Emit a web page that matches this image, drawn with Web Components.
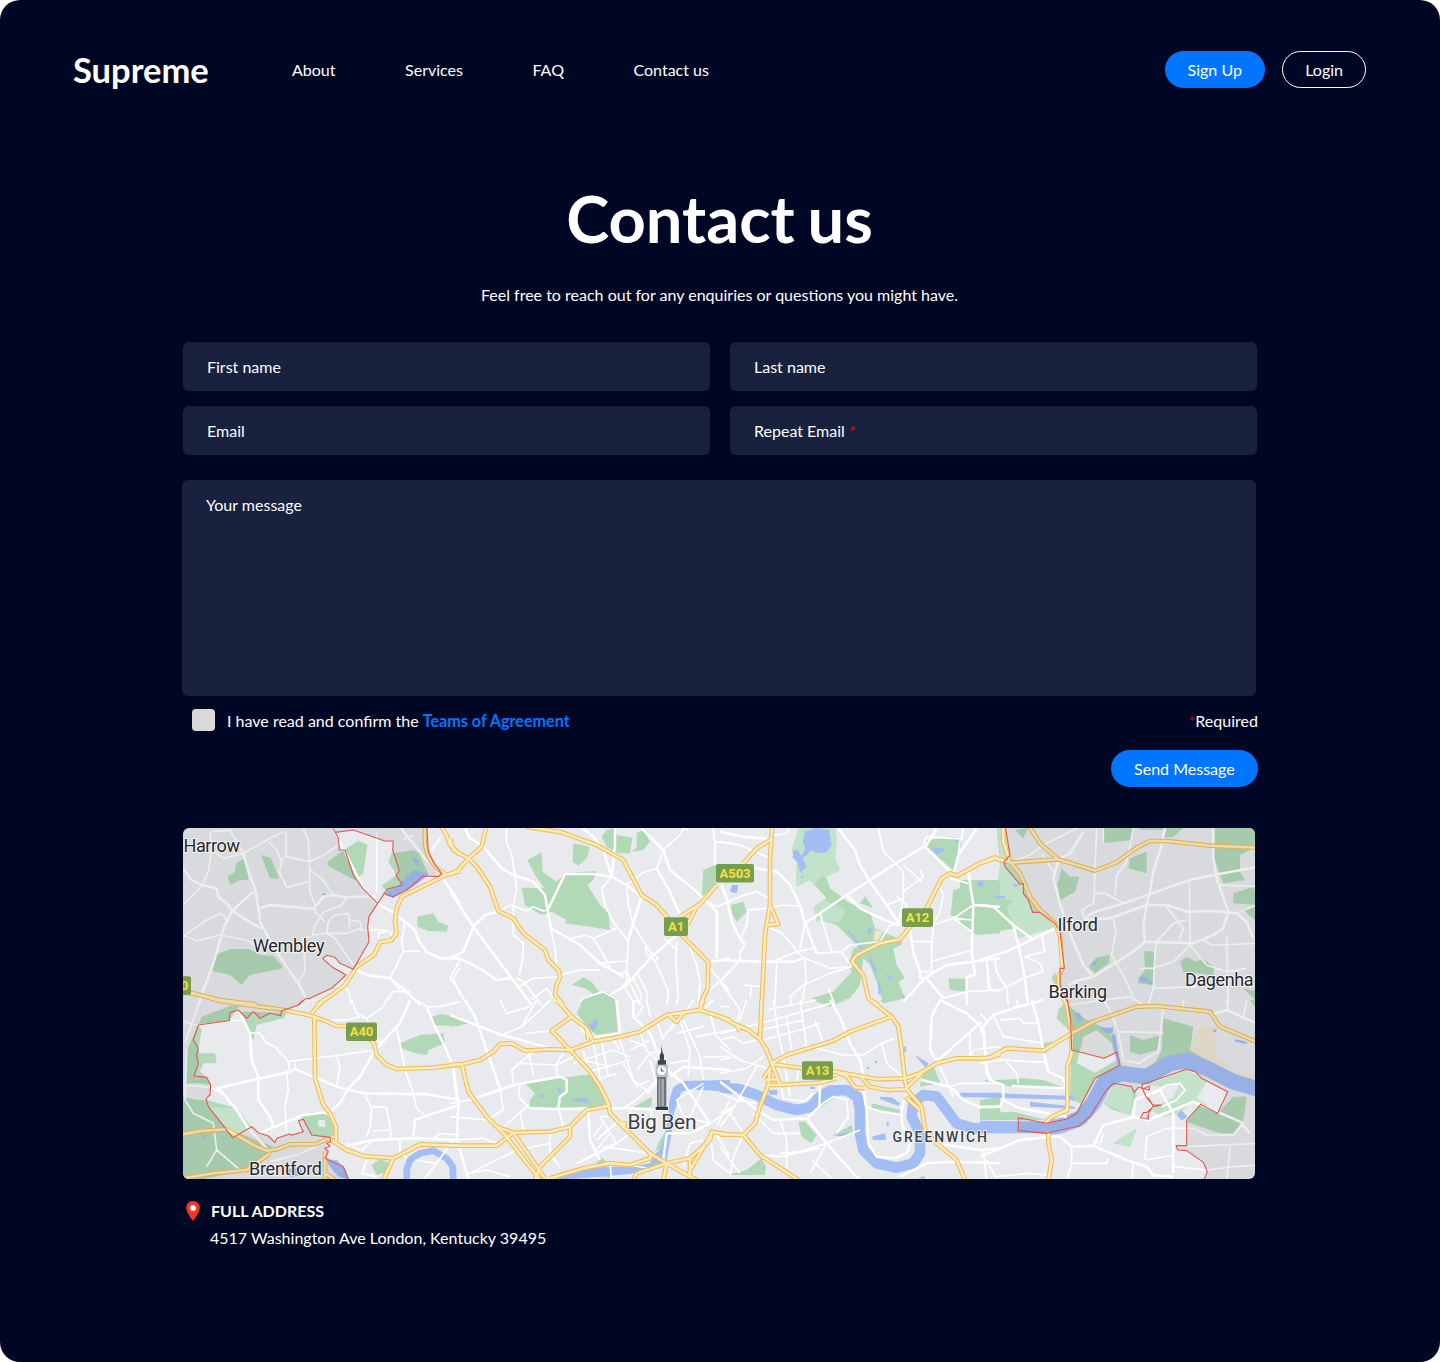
<!DOCTYPE html>
<html lang="en">
<head>
<meta charset="utf-8">
<title>Contact us</title>
<style>
html,body{margin:0;background:#fff}
body{font:16.03px/20px Lato,sans-serif;color:#fff}
</style>
</head>
<body>
<contact-page>
  <site-header slot="header"></site-header>
  <contact-form></contact-form>
  <city-map></city-map>
  <address-card><span slot="title">FULL ADDRESS</span>4517 Washington Ave London, Kentucky 39495</address-card>
</contact-page>
<script>
function define(name, html, setup) {
  const template = document.createElement('template');
  template.innerHTML = html;
  customElements.define(name, class extends HTMLElement {
    constructor() {
      super();
      this.attachShadow({mode: 'open'}).append(template.content.cloneNode(true));
      if (setup) setup(this.shadowRoot);
    }
  });
}

define('contact-page', `<style>
:host{display:flex;flex-direction:column;box-sizing:border-box;width:1440px;height:1362px;padding:51px 74px 0 73px;border-radius:20px;background:#000724}
h1{margin:92px 0 0;font-size:65px;line-height:76px;font-weight:700;text-align:center;word-spacing:-3px}
p{margin:29px 0 0;text-align:center}
main{display:flex;flex-direction:column;margin:37px 108px 0 109px}
</style>
<slot name="header"></slot>
<h1>Contact us</h1>
<p>Feel free to reach out for any enquiries or questions you might have.</p>
<main><slot></slot></main>`);

define('pill-button', `<style>
:host{display:block}
button{display:block;box-sizing:border-box;height:37px;padding:1px 23.300px 0 23px;border:0;border-radius:19px;background:#0075ff;color:#fff;font:inherit;white-space:nowrap}
:host([outline]) button{background:none;border:1px solid #fff;padding:1px 22px 0}
</style><button><slot></slot></button>`);

define('nav-link', `<style>:host{display:block}a{color:#fff;text-decoration:none}</style><a><slot></slot></a>`);

define('site-header', `<style>
:host{display:flex;align-items:center;height:37px}
strong{font-size:34.500px;line-height:40px;font-weight:700;width:219px}
nav{display:flex;gap:69.500px;flex:1}
div{display:flex;gap:17px}
</style>
<strong>Supreme</strong>
<nav><nav-link>About</nav-link><nav-link>Services</nav-link><nav-link>FAQ</nav-link><nav-link>Contact us</nav-link></nav>
<div><pill-button>Sign Up</pill-button><pill-button outline>Login</pill-button></div>`);

define('text-field', `<style>
:host{display:block;box-sizing:border-box;height:49px;padding:15px 24px;border-radius:6px;background:#18213d}
:host([multiline]){height:216px}
</style><slot></slot>`);

define('contact-form', `<style>
:host{display:block;margin-left:1px}
.grid{display:grid;grid-template-columns:527px 527px;gap:15px 20px}
.message{margin:25px 2px 0 -1px}
.row{display:flex;align-items:center;height:22px;margin-top:13px;padding-left:9px}
.box{width:22.500px;height:22.500px;border-radius:4px;background:#d9d9d9;margin-right:12.500px}
.terms{flex:1;padding-top:1px}
.terms b{color:#0075ff;font-size:16.150px}
i{color:red;font-style:normal}
.required{padding-top:1px}
.required i{color:#c20010}
.send{display:flex;justify-content:flex-end;margin-top:19px}
</style>
<div class="grid"><text-field>First name</text-field><text-field>Last name</text-field><text-field>Email</text-field><text-field>Repeat Email <i>*</i></text-field></div>
<text-field class="message" multiline>Your message</text-field>
<div class="row"><span class="box"></span><span class="terms">I have read and confirm the <b>Teams of Agreement</b></span><span class="required"><i>*</i>Required</span></div>
<div class="send"><pill-button>Send Message</pill-button></div>`);

define('address-card', `<style>
:host{display:flex;margin-top:22px;padding-left:4px}
svg{width:14px;height:20px;margin-right:10px}
.title{font-weight:700;padding-left:1px;margin-bottom:7px}
</style>
<svg viewBox="0 0 14 20"><path fill="#f23427" d="M7 0C3 0 .2 2.9.2 6.7.2 11.600 7 20 7 20s6.800-8.400 6.800-13.300C13.800 2.900 11 0 7 0Z"/><circle cx="7" cy="6.900" r="2.900" fill="#fff"/></svg>
<div><div class="title"><slot name="title"></slot></div><div><slot></slot></div></div>`);

/* Map sheets: each has an origin in page pixels; geometry is in thirds of a pixel. */
const SHEETS = [
{ at: [180, 825],
  park: '443,110 495,72 535,47 562,60 550,145 525,165 505,155 445,122|185,105 200,100 205,165 180,165 152,180 143,155 165,140 168,115|243,90 272,98 298,162 270,160|107,390 150,372 208,372 240,390 280,392 308,425 300,432 210,450 185,480 150,450 97,437|712,275 760,265 775,290 805,303 800,320 745,318 712,305|635,85 700,75 718,85 745,150 700,180 640,220 605,182 650,150 625,110',
  water: '620,200 650,185 680,155 700,135 745,145 740,155 700,185 640,218 615,210|693,95 715,105 718,125 705,115|428,205 436,205 436,212 428,212',
  major: '460,10 500,90 550,190 593,235 650,270 675,290 705,315 715,345 740,380 780,400 840,400|655,0 735,100 785,155 840,235|190,85 205,140 225,190 237,260 240,290 270,345 300,395 330,440 355,475 378,520|520,430 560,450 630,460 680,500 720,540|237,250 270,240 330,245 400,252 430,215 460,210 500,217 585,213|8,130 35,165 65,180 110,190 115,215 140,235 157,257 215,295 250,312|220,200 157,257 135,300 125,330 100,415 65,510 55,540',
  minor: '90,20 95,75 130,100 190,85 250,50 310,20|97,20 150,15 190,85|95,75 85,140 65,185 40,210 8,240|8,330 50,348 120,330 200,345 240,370|8,335 80,285 125,265 140,285|265,50 290,75 305,110 298,140 320,188 385,170|318,20 318,95 298,110|318,95 390,110 440,85 475,60|370,10 385,45 388,100 390,200 405,240 405,260 435,290|390,135 430,165 460,210|500,217 485,240 430,262 405,300 397,330 440,325 465,340 520,420|440,325 445,290 465,270 505,265 508,285 540,290 545,310 500,325 440,325|508,285 508,315|540,315 620,315|370,340 397,333|370,340 375,440 355,475|590,20 590,200|670,45 700,30|780,40 750,80|630,460 670,380 720,378|675,290 665,350 670,380|495,480 510,510 512,540|630,460 660,495|690,500 640,500 610,540|840,430 820,460 840,510|595,340 595,325 625,318 650,345',
  trunk: '735,0 735,60 745,95 765,125 798,150 840,138|780,0 800,30 810,60 840,90|798,150 740,178 665,215 650,250 645,290 650,325 635,345 600,352 582,390 530,425 495,480 455,510 410,540|8,495 60,510 120,525 230,538',
  shade: '0,0 460,0 475,40 478,75 495,75 520,150 548,190 593,235 567,275 563,305 567,350 520,433 480,415 465,397 440,391 428,401 455,425 498,450 455,490 385,522 378,520 368,525 0,525|460,0 465,22 520,15 615,48 640,48 638,75 658,138 648,150 667,180 622,192 610,205 638,215 680,195 730,153 775,155 785,145 765,120 745,80 740,0',
  border: '455,0 475,40 478,75 495,75 520,150 548,190 593,235 567,275 563,305 567,350 520,433 480,415 465,397 440,391 428,401 455,425 498,450 455,490 385,522 378,520 355,540|465,22 520,15 615,48 640,48 638,75 658,138 648,150 667,180 622,192 593,235|610,205 638,215 680,195 730,153 775,155 785,145 765,120 745,80 740,0' },
{ at: [450, 825],
  park: '232,105 275,82 278,140 320,170 345,145 438,138 430,165 412,180 450,240 475,265 480,315 420,305 345,295 350,285 305,260 275,270 225,240 215,188 283,190 255,150|370,55 420,65 410,100 385,122 368,110|455,35 470,15 495,8 500,30 547,38 540,85 505,85 495,80 470,65|560,25 580,15 600,50 580,75 545,80 560,65|755,215 760,135 800,118 800,180|365,480 400,457 425,470 448,500 430,507 405,490|390,540 400,520 460,498 490,510 495,540',
  major: '45,10 60,40 100,65 155,130 190,150 250,170 285,210 293,255 303,310 390,360 450,415 520,455|0,198 70,305 140,400 245,540|145,260 105,270 70,305 40,380 0,400|398,10 430,35 460,75 485,155|575,10 640,75 660,135 690,160 740,200 765,225 800,260 800,400|620,130 660,200 690,270|575,215 548,300 533,350|345,147 293,255|775,412 840,400|485,155 495,60 495,10|345,147 430,147 485,155 530,180 575,215|650,300 680,330 600,400 530,480 480,510|0,395 40,405 90,430 140,465 180,460',
  minor: '170,10 168,45 185,90 195,150 200,190 190,240 190,330 220,355 218,400 208,450|145,260 180,240 230,258 250,245 280,258 293,255|30,405 0,460 30,500 50,540|485,155 455,190 465,240 490,290 535,350 530,430 530,470|530,180 535,240 550,300 600,380 635,450 655,500 650,540|530,180 575,145 620,130 640,75 690,30 700,10 715,15|790,10 795,60 795,120|795,50 840,55|680,350 678,420 685,510 680,540|720,340 720,370 740,420 750,470 745,540|775,425 840,500|775,500 840,440|365,340 405,330 430,340 500,310|430,340 455,380 480,430|330,450 390,435 450,435|440,415 530,408|303,310 315,370 320,430|585,365 625,400 615,410 590,385 585,365|645,340 680,375|200,490 250,460 330,455|245,525 290,490 320,530|200,460 220,470 275,540|520,455 510,445 530,440 540,460 520,480 550,530 570,530 575,510 550,460|565,450 590,500 590,540|540,475 570,540|390,530 400,520 460,500 495,520|765,225 800,245 840,230',
  trunk: '0,40 10,75 55,100 80,125 120,185 145,258 190,280 220,325 285,375 295,405 325,435 330,455 320,480 315,510 340,540|110,0 95,65 55,100 25,135 0,148|228,5 335,22 440,60 520,105 575,210 620,240 650,275 700,335 775,412 773,490 750,540|690,275 750,238 800,180|740,245 712,300' },
{ at: [720, 825],
  park: '240,0 345,0 350,45 345,100 360,135 318,155 330,190 390,235 450,260 465,310 545,345 545,360 520,370 530,420 555,460 535,470 555,520 490,535 470,470 450,420 430,400 420,480 390,520 320,540 275,520 340,500 395,440 385,420 400,370 415,365 350,300 300,285 290,290 282,245 320,220 270,165 230,185 228,110 215,75|33,240 70,230 80,260 50,290 38,270|620,45 700,37 725,50 715,90 705,140 620,65|700,195 720,190 720,165 840,165 840,325 770,330 720,300 722,280 692,270|685,460 740,462 738,500 690,495|420,235 435,213 460,250',
  pale: '240,0 345,0 350,45 345,100 360,135 318,155 300,155 285,185 270,165 230,185 228,110 215,75|282,245 310,225 380,255 355,295 300,285 290,290',
  sand: '465,315 490,320 475,345 460,345',
  water: '255,20 290,8 328,15 335,60 320,82 295,85 272,76 262,90 248,98 260,125 240,145 233,110 218,98 220,76 232,75 245,92 256,70 248,52|635,70 670,68 672,80 650,88|35,180 55,180 50,205 30,200|380,315 385,315 430,370 425,375|450,300 455,320 440,330|475,460 485,500 475,510|445,395 450,395 472,440 465,445|500,445 520,460 515,465 500,455|545,505 557,515 550,520|705,42 720,42 720,50 705,50|774,170 788,170 788,185 774,185|825,215 840,215 840,220 825,220|244,152 250,152 250,160 244,160',
  major: '100,128 170,140 210,180 240,240 255,295 290,385|255,295 300,265 380,210 450,165 520,120 620,60 650,10|355,10 405,75 420,120 450,170 500,240 540,300|5,180 20,220 35,290 60,340 75,360|0,405 130,410 220,410 250,400|610,60 700,150 715,90 770,10|745,140 750,175 760,240 755,380 765,450 740,455 740,540|620,455 680,420 840,400|570,310 580,380 600,440 600,460 620,460 670,520|760,240 840,245|615,460 550,530|380,210 420,250 505,290 540,300|0,20 70,35 150,42',
  minor: '0,50 60,60 150,100|155,32 200,25 205,10|475,10 490,80 550,140 550,220 535,300|500,240 550,220|230,380 255,400 258,460 245,540|170,405 230,380 280,370|290,385 365,380 390,360 480,350 510,300 540,300|75,360 60,380 60,405 0,470 50,540|170,410 165,540|255,400 330,430 395,425|365,380 395,425 330,445 250,480 210,515 215,540|325,490 345,540|300,265 335,380|85,255 80,300 60,345|85,255 140,250 190,240 240,243|0,240 60,215 110,200 145,220|550,120 605,170|610,60 620,35 720,42 715,90|730,10 725,45|690,160 745,175|670,520 740,500 840,495|755,285 700,280 640,300 635,350 635,450 615,460|760,240 700,280 755,320|640,350 580,350|630,410 760,375|595,440 630,440|800,405 810,490|655,180 670,210 660,260 640,300|70,480 120,485|95,480 90,520|150,310 180,320 210,350 230,380|255,295 240,370|530,215 560,240 550,260|600,135 610,155 550,200',
  trunk: '157,0 150,100 150,240 135,330 125,540|155,42 110,70 70,115|150,240 175,298 140,300|840,105 825,97 785,112 712,152 690,145 665,160 620,250 570,305 540,343 480,355 410,390 395,410 430,450 445,520 475,540' },
{ at: [980, 825],
  park: '50,0 75,0 95,120 150,215 215,295 220,310 195,315 165,310 115,340 110,310 0,328 0,175 55,165 60,120|365,0 460,0 455,45 370,55|245,130 270,155 298,155 285,200 240,225 232,180|450,100 500,80 500,145 445,130|700,0 840,0 820,70 780,90 780,140 795,165 730,175 700,95|760,205 820,185 840,240 760,235|790,255 840,240 840,300|325,425 350,397 390,390 385,415 345,445|475,460 495,435 492,378 525,380 520,480 475,475|600,410 620,395 650,410 665,400 702,425 700,450 610,440|790,490 840,500 840,540|560,0 610,10 580,35 550,38|105,15 145,8 130,40|230,490 215,460 225,440 250,540|480,0 555,0 550,15 480,15',
  pale: '55,0 75,0 95,120 150,215 215,295 220,310 115,340 80,250 100,225 60,222 60,175 55,165 60,120',
  water: '480,455 505,455 505,470 480,470|505,468 518,468 518,478 505,478|335,415 350,405 345,425|45,212 75,212 75,220 45,220|95,175 120,180 105,187|0,170 8,170 8,185 0,185',
  major: '235,103 220,160 240,235 260,300 310,420 340,455|315,280 340,262 430,235 530,200 630,165 700,150 840,125|700,10 700,100 710,160 745,260 730,310 700,330 640,355 495,350|460,380 340,455 280,470|0,240 40,245 100,300 155,340|0,405 80,380 225,310|100,300 115,360 130,430 145,540|315,285 390,280 500,240 560,240 620,260 700,258 770,265 800,290 820,340|555,10 545,60 520,140 510,200 500,240 490,300 495,350 460,380|235,103 270,85 310,20',
  minor: '100,108 150,90 190,60 240,35 295,8|350,10 345,130 343,205 375,205 430,235|343,205 340,235 305,255 315,285|460,10 440,110 410,150 405,210|628,165 630,360|400,280 408,320 395,390 430,450 460,515|630,360 580,410 520,430 480,430|630,360 680,420 740,440 800,430|740,330 745,540|670,345 695,360 840,355|560,245 610,310 595,355|620,285 580,295 530,350 525,380 520,490 650,485|20,400 25,490 50,500 130,460 190,440 180,415 135,395 195,380 185,330|720,180 840,185|770,265 830,240|45,400 50,440 80,490 85,540|270,540 370,525 450,515 490,540|265,480 310,460|520,490 505,540|370,55 370,0|185,85 220,140',
  trunk: '70,0 70,50 90,110 120,145 150,215 180,255 225,295 240,330 247,430 235,455 238,500 262,540|0,115 45,100 95,113 235,103 345,137 410,112 470,68 510,48 560,48 690,62 840,68|145,0 180,55 235,103',
  shade: '75,0 90,90 72,110 75,125 120,178 130,175 130,205 145,225 158,262 180,262 225,295 240,320 253,430 240,430 240,480 262,525 840,525 840,0',
  border: '75,0 90,90 72,110 75,125 120,178 130,175 130,205 145,225 158,262 180,262 225,295 240,320 253,430 240,430 240,480 262,530' },
{ at: [180, 1000],
  park: '65,50 150,18 180,15 148,60 55,75|55,75 65,90 55,150 60,160 105,160 110,190 70,190 60,215 80,232 92,255 55,250 15,250 22,150 48,90|180,35 220,35 320,40 310,55 230,75 220,120 205,100 200,70|0,290 60,300 80,300 170,325 215,380 180,400 280,440 270,470 200,510 60,540 0,540|365,350 400,335 440,345 465,370 470,400 450,412 395,405 370,360|755,50 780,43 840,50 840,78 755,75|660,130 720,105 790,100 795,130 745,150 740,165 705,160 665,145|575,495 600,478 630,490 620,515 590,525',
  pale: '85,320 170,325 215,380 158,410',
  land: '415,360 435,360 437,380 415,380',
  water: '438,478 470,480 495,505 510,540 475,530 450,500|70,405 78,405 76,418 70,418|310,510 360,500 370,525 330,530',
  river: ['20', '680,540 680,510 690,480 720,460 760,452 800,475 818,500 820,540'],
  major: '690,0 660,70 585,150 540,230 505,265 480,310 450,335 370,345 310,370 235,400|740,20 760,70 795,140 820,200 835,310|110,265 330,215 345,207 470,260 550,280 740,283 840,300|175,30 210,100 215,180 235,230 235,300 270,350 280,380|95,265 125,275 170,330 205,385 260,445|840,315 760,340 705,360 700,410|490,440 580,420 700,415 840,420',
  minor: '8,65 55,75 185,60|210,98 240,100 260,130 285,140 325,185 480,165 585,150|325,185 330,215|345,207 345,190|470,170 480,200 470,260|320,220 325,270 315,320 320,395|120,262 125,285|60,0 15,130|20,150 15,300|8,255 90,262|650,85 660,130 675,210 700,280 710,325 740,350|580,420 545,450 550,470|555,285 575,325 570,380 560,410|570,320 620,322 632,390 580,393|632,390 632,415|515,0 530,40 560,55 610,20|560,55 575,100|660,420 660,455 680,475|740,20 710,0|740,20 780,20 840,5|15,300 40,340 100,370 110,450 180,510|110,450 80,500|705,480 770,490 820,420|770,490 730,540|560,480 545,520 590,530|270,485 350,465 430,430|455,60 500,60 540,50|760,415 780,400 840,405|575,130 595,120 605,135 585,150|500,430 540,450',
  trunk: '0,-25 60,-15 120,3 200,15 300,28 385,45 435,62 470,78 510,78 555,105 582,130 590,165 620,195 650,207 760,203 840,193|430,0 395,40|403,50 405,235 430,315 450,340 468,380 468,425|0,405 60,393 140,388 165,403 220,435 260,452 290,448 330,433 410,432 445,415 500,450 550,468 640,475 720,433 840,437|640,475 610,540|270,460 200,510 100,520 10,535|435,455 435,540|435,520 465,540',
  shade: '0,0 368,0 355,15 305,45 270,40 240,55 220,35 200,55 175,30 150,38 148,62 55,75 40,120 55,145 50,165 55,190 42,228 80,232 92,255 90,285 78,295 85,320 158,413 215,380 235,398 265,408 285,428 290,415 330,402 370,395 355,362 370,358 395,405 450,412 440,430 435,445 445,450 435,475 490,500 505,540 0,540',
  border: '370,0 355,15 305,32 302,47 270,40 240,55 220,35 200,55 175,30 150,38 148,62 55,75 40,120 55,145 50,165 55,190 42,228 80,232 92,255 90,285 78,295 85,320 158,413 215,380 235,398 265,408 285,428 290,415 330,402 335,406 370,395 355,362 370,358 395,405 450,412 452,425 440,430 450,438 435,445 445,455 435,475 490,500 505,540' },
{ at: [450, 1000],
  park: '380,40 400,0 495,0 503,95 440,105 420,90|225,250 400,225 430,225 440,250 465,300 465,320 320,325 240,325 240,300 255,280|0,50 60,70 0,80|545,325 605,290 605,330|450,470 465,480 465,495 440,490|625,430 645,395 640,440 615,455|420,530 480,520 490,535',
  water: '840,240 700,243 670,262 658,300 655,350 645,400 635,440 610,470 600,490 540,500 470,500 350,515 320,540 450,530 540,522 600,507 650,480 665,400 672,340 685,300 695,275 720,268 840,275|0,480 15,500 15,540 0,540|430,65 437,55 445,70 430,95 415,75|365,297 410,295 420,308 365,303|268,286 282,284 282,292 268,292|318,262 335,268 330,282',
  major: '45,0 75,50 120,180 150,265|0,45 65,70 155,105 250,130 300,145|60,300 190,255 330,230 350,240 350,275 330,290 325,325|10,220 25,320 20,415 50,520 55,540|240,325 325,327 470,325 540,325 650,330|640,200 700,250 780,370 720,400 650,400|550,0 550,50 600,100 640,200|500,430 380,490|380,50 400,95 440,112 510,100 500,0|660,230 700,200 840,210|650,400 640,480|415,330 420,420 450,480',
  minor: '155,105 215,80 260,0|210,255 205,290 240,325|0,310 60,300|150,390 230,320|0,420 100,415 150,435|210,330 220,390|325,325 340,380|250,155 185,210 190,250|235,155 250,225|340,160 320,190 320,225|200,190 320,195 370,170|400,150 410,200 440,240|430,130 450,235|455,125 475,230|385,185 490,150 540,170|420,215 540,180|440,240 500,220|505,110 530,180 550,240 600,280|570,95 590,150 640,200|590,0 600,50|600,120 540,150|620,60 640,120|690,60 720,150 715,230|680,100 760,80|720,180 660,190|540,120 590,140|700,60 750,170 760,240|760,170 840,170|680,65 640,110|780,370 840,330|780,370 700,350 680,300 760,250|760,260 720,350|510,330 560,300 620,240|600,320 610,400|540,330 540,380|475,350 450,350 500,430|440,420 510,360|500,430 540,400|300,400 300,460 330,500|55,520 110,510 180,530|60,520 200,450 300,430|480,490 485,540|460,440 600,460|460,370 430,410|480,400 440,450|800,380 840,300|790,0 760,30|730,0 690,60|150,0 170,40 240,20|225,100 305,92|600,180 620,250 590,280|640,150 600,160 560,210|560,0 580,20 560,50|520,190 560,260 600,240|780,40 800,110 840,150|740,110 840,90|300,0 260,40 215,80|490,120 510,150|370,190 400,180 480,200|0,350 110,360|700,500 720,430 760,420|800,405 840,470|780,400 790,480 840,520|540,495 620,510|150,265 160,330 110,360',
  trunk: '320,0 365,50 410,85 430,125|365,50 305,92 360,150 420,215 450,260 475,310 480,340 520,380 600,460 650,490 720,530|0,195 35,193 90,180 130,155 150,132 185,130 225,152 300,148 360,150 430,125 510,110 570,95 650,45 750,30 840,60|750,30 760,0|35,193 55,275 110,350 165,405 270,540|0,437 140,437 190,398 300,395 360,380 410,330 475,318|360,380 360,410 270,500 255,540|140,380 190,398 285,535|300,535 400,505 480,490 540,495 600,475 605,460|650,490 720,475 780,420 785,395 840,405|785,400 715,520|650,490 640,540|650,490 560,520 550,540|720,470 720,530 740,540|655,45 680,65 700,40|410,85 415,120|500,365 525,370 520,385' },
{ at: [720, 1000],
  park: '610,210 640,195 660,250 600,260|780,300 840,290 840,360 780,355|235,365 255,365 290,405 275,430 245,410|20,525 80,510 125,475 138,500 135,525|275,0 380,0 330,20|455,310 540,330 540,340 455,325|590,540 610,525 620,540|790,240 840,240 840,255|340,405 395,375 400,400|270,300 330,255 380,265 300,325|480,0 530,0 490,10',
  water: '720,278 840,278 840,292 720,292|455,410 495,400 498,420 460,420|335,405 390,398 370,410|480,290 515,292 540,310 535,318 480,297|585,165 625,190 618,205|440,200 447,200 447,207 440,207|465,183 472,183 472,190 465,190|500,365 507,365 505,378 500,378|550,140 558,140 558,155 550,155|145,270 172,270 172,284 148,284|270,260 285,260 285,267 270,267',
  river: ['32', '0,262 60,268 110,285 170,315 230,330 270,322 300,290 330,272 380,270 412,290 420,330 420,400 430,450 470,490 530,503 580,490 600,460 600,400 575,350 580,310 610,285 650,290 680,330 710,370 760,385 840,382'],
  major: '330,0 360,50 390,130 420,180 430,225|660,0 635,50 630,150 655,190|430,265 440,330 445,430 470,470 520,475 560,460 570,430 545,370 545,330 560,280|300,250 298,320 260,355 160,360 110,330 60,290 0,245|260,355 320,430 400,520 420,540|605,240 690,260 730,300 780,322 840,320|540,530 620,490 700,485 840,490|660,0 740,40 790,85 800,200 810,245|650,430 780,450 840,445|785,65 650,185',
  minor: '750,100 750,175|485,130 430,165 370,165 250,135|485,130 500,190 555,235|485,130 525,115|440,320 480,335 545,345|320,430 420,390|320,430 240,455 180,460|260,355 310,310 340,290 380,300 385,350 350,400|0,140 60,180 140,205|0,180 50,170|0,100 120,70 230,40 330,10|130,120 240,90 300,70|240,0 260,140|160,0 175,100 190,170|190,170 210,290|235,210 230,245|60,290 30,340 0,380|30,340 70,400|60,290 110,200|0,340 40,320|690,260 720,250 840,250|660,200 700,290|70,405 40,470 30,530|180,360 200,420 200,500|120,90 250,60|40,0 60,30 50,75|0,20 30,20|185,265 190,295 250,305 280,280|275,480 340,540|120,465 180,470 300,445|0,220 80,205 130,170|140,30 290,0|200,50 215,150|0,280 50,300 110,310|285,60 310,130|320,430 270,520|100,340 160,400 240,400|0,440 60,520|790,450 800,540|750,175 760,150 840,140|60,60 80,0|0,120 40,110 70,130 110,120',
  trunk: '0,50 50,75 85,90 120,118 140,150 155,190 180,255|125,0 120,118|155,190 200,165 340,122 390,95 515,50|450,0 515,50 535,80 545,150 555,240 560,265|155,192 250,205 345,215 420,228 470,238 555,235 600,220 650,190 710,175 800,175 840,163|130,235 150,205 145,255 180,255 300,248 350,235|145,255 120,320 105,370 70,405 0,403|70,405 120,465 235,540|345,215 380,228 405,262 435,265|420,228 450,260 500,270 555,268 605,220|560,268 605,320 615,390 650,430 710,480 735,540|555,290 600,330|50,75 60,95|135,240 175,238' },
{ at: [980, 1000],
  park: '235,30 260,0 275,90 265,90 230,55|270,20 320,60 390,90 410,155 420,195 345,235 305,310 270,300 275,90|550,55 640,80 630,150 700,190 740,220 560,200 520,200 545,150|450,105 490,120 545,105 530,150 480,165 450,155|10,243 130,235 190,240 250,262 100,262|370,310 400,255 460,265 470,285 450,345 400,330|400,430 470,385 450,440|620,365 662,313 713,340 760,290 800,290 790,360 760,400 720,400|0,340 100,335 200,360 0,360|810,0 840,0 840,20 820,15|185,130 220,125 195,165',
  pale: '500,255 620,210 743,275 700,335 640,300 600,340 550,350 510,330 580,290 600,250 540,260|370,310 400,255 460,265 450,345|400,430 470,385 450,440',
  land: '290,190 310,110 350,90 395,130 410,180 345,218|650,295 680,245 743,275 713,335',
  sand: '660,80 700,80 708,165 760,210 820,225 820,240 700,190 630,150',
  water: '0,278 280,288 280,300 0,292|150,305 285,320 285,326 150,320|360,85 400,82 398,100 380,98|285,40 298,38 308,62 290,62|590,345 605,330 622,350 605,362|765,118 800,125 800,132 765,125|395,105 405,100 422,195 410,195|0,362 210,365 210,400 0,400|700,88 710,88 708,97 700,97|500,345 508,345 508,355 498,355',
  river: ['47', '200,382 240,378 300,355 340,310 375,245 420,220 500,230 570,190 620,182 680,205 760,245 850,272'],
  major: '155,0 175,70 190,150 205,215 250,235 260,265|0,90 40,45 100,25 190,0|10,90 20,220 40,245 70,255 70,300 60,320 0,320|95,258 260,265|70,300 120,325 260,350|0,470 50,450 120,420 210,410 240,410 275,440 340,437 440,480 500,500 520,525 580,530|340,437 370,375 460,352 505,360 580,330 640,305 700,330 780,365 810,400|460,352 465,300 540,270 580,340 580,520|690,45 740,30 840,75|340,425 355,425',
  minor: '40,45 70,110 190,130|0,190 60,180 200,187|80,185 110,220 115,250|370,400 360,435|500,410 560,385 640,385 680,405 760,405 790,370|495,480 500,410|275,440 275,490 380,490 385,475|20,480 45,530 150,520 200,525|620,440 840,430|540,270 560,255 600,250 615,270 590,300 545,320|460,490 455,540|370,0 390,30 415,95 430,180 480,190 490,180 535,155 550,20|415,95 550,98|610,0 610,25|800,0 790,50|580,500 680,510 760,500 840,495|580,465 500,480|60,60 120,55 130,70 170,70|110,0 115,25|750,440 740,540|275,490 260,540|0,100 20,60 0,40|220,495 205,520|740,0 745,30',
  trunk: '0,175 30,173 80,145 190,152 275,100 340,65 470,20 530,18 690,35 720,80 840,130|258,0 275,100 275,160 262,200 262,330 215,350 195,370|205,395 205,430 215,480 205,540',
  shade: '262,0 275,150 372,175 410,157 420,195 345,235 305,310 292,338 260,357 200,370 115,353 115,392 200,400 297,378 330,350 380,270 400,250 455,262 462,278 475,262 488,254 620,208 645,215 665,235 743,275 713,340 662,313 620,360 620,437 588,437 593,450 620,452 670,487 682,515 672,540 840,540 840,0',
  border: '262,0 272,60 275,150 372,175 410,157 420,195 345,235 305,310 292,338 260,357 200,370 115,353 115,392 200,400 297,378 330,350 380,270 400,250 455,260 462,278 475,262 508,270 508,258 488,268 485,254 620,208 645,215 665,235 743,275 713,340 662,313 620,360 620,437 588,437 593,450 620,452 670,487 682,515 672,540|488,268 498,290 518,315 545,315 520,320 500,338 490,338 482,353 505,358 505,340 520,318 505,293' }
];

const path = (lines, close) => lines.split('|').map(l => 'M' + l + (close ? 'Z' : '')).join('');
const layer = (key, attrs, close) => SHEETS.filter(s => s[key]).map(s =>
  `<path transform="translate(${s.at}) scale(.33333)" d="${path(s[key], close)}" ${attrs}/>`).join('');
const rivers = SHEETS.filter(s => s.river).map(s =>
  `<path transform="translate(${s.at}) scale(.33333)" d="${path(s.river[1])}" fill="none" stroke="#a3bdf5" stroke-width="${s.river[0]}"/>`).join('');
const label = (x, y, w, size, text, extra = '') =>
  `<text x="${x}" y="${y}" font-size="${size}" textLength="${w}" ${extra}>${text}</text>`;
const shield = (x, y, w, text) =>
  `<rect x="${x}" y="${y}" width="${w}" height="18.600" rx="2" fill="#779e4d"/><text x="${x + w / 2}" y="${y + 13.900}" class="shield">${text}</text>`;

define('city-map', `<style>
:host{display:block;margin:41px 0 0 1px;width:1072px;height:351px}
svg{display:block;border-radius:6px}
text{font-family:Roboto,sans-serif;fill:#25272a;stroke:#fff;stroke-opacity:.75;stroke-width:2px;paint-order:stroke;stroke-linejoin:round}
.shield{font-size:13px;font-weight:700;fill:#f9de45;stroke:none;text-anchor:middle}
</style>
<svg width="1072" height="351" viewBox="183 828 1072 351" stroke-linejoin="round">
<rect x="183" y="828" width="1072" height="351" fill="#e8eaed"/>
${layer('park', 'fill="#b1d9b8"', true)}${layer('pale', 'fill="#c2e3c9"', true)}${layer('land', 'fill="#e8eaed"', true)}${layer('sand', 'fill="#efe5d0"', true)}
${rivers}${layer('water', 'fill="#a3bdf5"', true)}
${layer('minor', 'fill="none" stroke="#fff" stroke-width="5"')}
${layer('major', 'fill="none" stroke="#fff" stroke-width="7.500"')}
${layer('trunk', 'fill="none" stroke="#efbd5b" stroke-width="14"')}
${layer('trunk', 'fill="none" stroke="#fdebba" stroke-width="7.500"')}
${layer('shade', 'fill="#000010" fill-opacity=".068"', true)}
${layer('border', 'fill="none" stroke="#df5a4e" stroke-width="3.300"')}
${shield(716, 864, 38, 'A503')}${shield(664, 917.300, 24, 'A1')}${shield(902, 908.300, 31, 'A12')}${shield(346, 1022.500, 31, 'A40')}${shield(802, 1061.200, 31, 'A13')}${shield(160, 976.300, 31, '')}
<text class="shield" x="184.500" y="990.100">0</text>
${label(183.500, 851.900, 56.500, 18, 'Harrow')}${label(253, 951.900, 71.500, 18, 'Wembley')}${label(1057.500, 931.200, 40.500, 18, 'Ilford')}${label(1048.500, 998.200, 58.500, 18, 'Barking')}${label(1185, 986, 68.500, 18, 'Dagenha')}${label(249, 1174.700, 73, 18, 'Brentford')}
${label(627.500, 1128.500, 69, 21, 'Big Ben', 'style="fill:#3c3f44"')}
${label(892.500, 1141.500, 94.500, 14, 'GREENWICH', 'style="fill:#3c3f44" font-weight="500"')}
<g transform="translate(450 1000) scale(.33333)">
<path fill="#3f454b" d="M635 137l3 22 4 6v16h6v14h-25v-14h6v-16l4-6z"/>
<path fill="#bfc1c4" d="M617 194h37v38h-37z"/><circle cx="635" cy="212" r="13" fill="#fff"/><path d="M634 203v10h9" fill="none" stroke="#555" stroke-width="3"/>
<path fill="#707377" d="M621 231h28v91h-28z"/><path fill="#a8aaae" d="M626 237h5v82h-5zM634 237h8v82h-8z"/>
<path fill="#33373b" d="M617 321h37v9h-37z"/></g>
</svg>`);
</script>
</body>
</html>
